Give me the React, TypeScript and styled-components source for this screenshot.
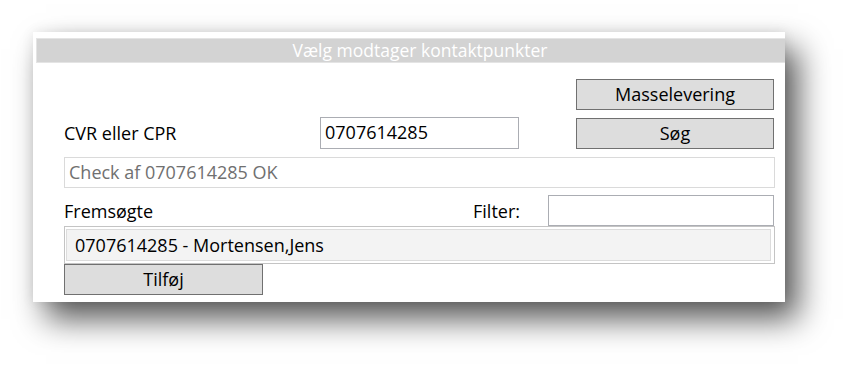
import React from "react";
import styled, { createGlobalStyle } from "styled-components";

const Global = createGlobalStyle`
  html, body { margin: 0; padding: 0; background: #ffffff; }
  body { font-family: "Open Sans", "Noto Sans", sans-serif; color: #000; }
`;

const Page = styled.div`
  width: 850px;
  height: 368px;
  padding: 32px 0 0 33px;
  box-sizing: border-box;
  overflow: hidden;
`;

const Panel = styled.div`
  width: 752px;
  height: 270px;
  box-sizing: border-box;
  background: #ffffff;
  padding: 6px 0 0 3px;
  box-shadow: 13px 17px 30px rgba(0, 0, 0, 0.66), 0 0 12px rgba(0, 0, 0, 0.08);
  display: flex;
  flex-direction: column;
`;

const Header = styled.div`
  height: 25px;
  box-sizing: border-box;
  background: #d3d3d3;
  border: 1px solid #e4e4e4;
  border-right: none;
  color: #ffffff;
  font-size: 17.5px;
  line-height: 22px;
  text-align: center;
  padding-left: 18px;
`;

const Body = styled.div`
  display: flex;
  flex-direction: column;
  padding: 0 10px 0 28px;
`;

const Row = styled.div<{ $top?: number; $h: number }>`
  display: flex;
  align-items: center;
  height: ${(p) => p.$h}px;
  margin-top: ${(p) => p.$top ?? 0}px;
`;

const Label = styled.span`
  font-size: 18px;
  line-height: 24px;
  width: 256px;
  flex: none;
`;

const FilterLabel = styled.span`
  font-size: 18px;
  line-height: 24px;
  margin-left: auto;
  margin-right: 28px;
`;

const Button = styled.button<{ $w: number }>`
  width: ${(p) => p.$w}px;
  height: 31px;
  box-sizing: border-box;
  background: #dddddd;
  border: 1px solid #707070;
  border-radius: 0;
  font-family: inherit;
  font-size: 18px;
  line-height: 24px;
  color: #000;
  padding: 0 0 2px 0;
  flex: none;
`;

const RightButton = styled(Button)<{ $end?: boolean }>`
  margin-left: auto;
  margin-right: 1px;
  align-self: ${(p) => (p.$end ? "flex-end" : "center")};
`;

const TextInput = styled.div<{ $w: number; $h: number; $mr?: number }>`
  width: ${(p) => p.$w}px;
  height: ${(p) => p.$h}px;
  margin-right: ${(p) => p.$mr ?? 0}px;
  box-sizing: border-box;
  border: 1px solid #abadb3;
  background: #fff;
  padding: 0 4px;
  font-size: 18px;
  line-height: 28px;
  flex: none;
`;

const Status = styled.div`
  flex: 1;
  height: 31px;
  box-sizing: border-box;
  border: 1px solid #dadada;
  padding: 0 4px;
  font-size: 18px;
  line-height: 28px;
  color: #707070;
`;

const ListBox = styled.div`
  height: 38px;
  box-sizing: border-box;
  border: 1px solid #c4c4c4;
  padding: 2px 3px 2px 1px;
  display: flex;
  flex-direction: column;
`;

const ListItem = styled.div`
  flex: 1;
  box-sizing: border-box;
  background: #f3f3f3;
  border: 1px solid #dcdcdc;
  padding: 0 8px;
  font-size: 18px;
  line-height: 30px;
`;

export default function App() {
  return (
    <>
      <Global />
      <Page>
        <Panel>
          <Header>Vælg modtager kontaktpunkter</Header>
          <Body>
            <Row $top={16} $h={31}>
              <RightButton $w={198}>Masselevering</RightButton>
            </Row>
            <Row $top={7} $h={32}>
              <Label>CVR eller CPR</Label>
              <TextInput $w={199} $h={32}>0707614285</TextInput>
              <RightButton $w={198} $end>Søg</RightButton>
            </Row>
            <Row $top={8} $h={31}>
              <Status>Check af 0707614285 OK</Status>
            </Row>
            <Row $top={7} $h={31}>
              <Label>Fremsøgte</Label>
              <FilterLabel>Filter:</FilterLabel>
              <TextInput $w={226} $h={31} $mr={1} />
            </Row>
            <ListBox>
              <ListItem>0707614285 - Mortensen,Jens</ListItem>
            </ListBox>
            <Row $h={31}>
              <Button $w={199}>Tilføj</Button>
            </Row>
          </Body>
        </Panel>
      </Page>
    </>
  );
}
